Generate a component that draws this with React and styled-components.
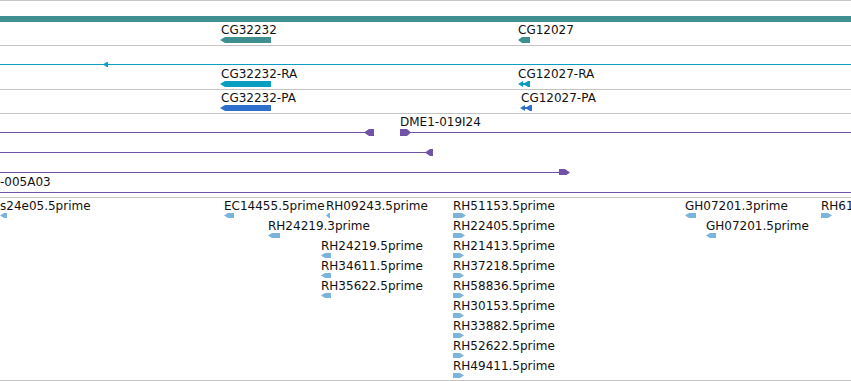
import styled, { createGlobalStyle } from "styled-components";

const GlobalStyle = createGlobalStyle`
  html, body {
    margin: 0;
    padding: 0;
    background: #ffffff;
  }
  body {
    font-family: "DejaVu Sans", "Liberation Sans", sans-serif;
  }
`;

const COLORS = {
  gene: "#3f8f90",
  rna: "#0a9ec0",
  protein: "#2f6fcc",
  clone: "#7052a8",
  est: "#7ab4dc",
};

const WIDTH = 851;

const Browser = styled.div`
  display: flex;
  flex-direction: column;
  width: ${WIDTH}px;
  height: 381px;
  overflow: hidden;
  border-bottom: 1px solid #c4c4c4;
  box-sizing: border-box;
`;

const Track = styled.section`
  display: flex;
  flex-direction: column;
  flex: none;
  height: ${(p) => p.$h}px;
  padding-top: ${(p) => p.$pad || 0}px;
  box-sizing: border-box;
  border-top: 1px solid #c4c4c4;
  overflow: hidden;
`;

// one horizontal lane of a track; features sit on it at their genomic x
const Lane = styled.div`
  position: relative;
  flex: none;
  height: ${(p) => p.$h}px;
`;

const StrandBar = styled.div`
  flex: none;
  height: 6px;
  background: ${(p) => p.$color};
  margin-bottom: 1px;
`;

const Feature = styled.div`
  position: absolute;
  top: 0;
  left: ${(p) => p.$x}px;
  display: flex;
  flex-direction: column;
  align-items: flex-start;
`;

const Label = styled.span`
  display: block;
  font-size: 12px;
  line-height: 14px;
  height: 14px;
  padding-left: ${(p) => p.$indent || 0}px;
  color: #111;
  white-space: nowrap;
`;

const Glyph = styled.svg`
  display: block;
  flex: none;
`;

const LaneDrawing = styled.svg`
  display: block;
  flex: none;
`;

function arrowPoints(w, h, dir, tip) {
  return dir === "left"
    ? `0,${h / 2} ${tip},0 ${w},0 ${w},${h} ${tip},${h}`
    : `0,0 ${w - tip},0 ${w},${h / 2} ${w - tip},${h} 0,${h}`;
}

// box with a pointed end, the way a feature on one strand is drawn
function Arrow({ w, h = 6, dir = "left", color, tip = 4 }) {
  return (
    <Glyph width={w} height={h} viewBox={`0 0 ${w} ${h}`}>
      <polygon points={arrowPoints(w, h, dir, tip)} fill={color} />
    </Glyph>
  );
}

function DoubleArrow({ color }) {
  return (
    <Glyph width={13} height={6} viewBox="0 0 13 6">
      <polygon points="0,3 5,0 5,6" fill={color} />
      <polygon points="5,3 10,0 10,6" fill={color} />
      <rect x="4" y="2" width="8" height="2" fill={color} />
      <rect x="10" y="0" width="2" height="6" fill={color} />
    </Glyph>
  );
}

function LabelledFeature({ x, label, indent, children }) {
  return (
    <Feature $x={x}>
      <Label $indent={indent}>{label}</Label>
      {children}
    </Feature>
  );
}

// a line across the lane with arrow heads at given places
function LineLane({ h, y, color, segments, heads = [] }) {
  return (
    <LaneDrawing width={WIDTH} height={h} viewBox={`0 0 ${WIDTH} ${h}`}>
      {segments.map(([x1, x2]) => (
        <rect key={x1} x={x1} y={y} width={x2 - x1} height={1} fill={color} />
      ))}
      {heads.map((hd) => (
        <polygon
          key={hd.x}
          transform={`translate(${hd.x} ${y + 0.5 - hd.h / 2})`}
          points={arrowPoints(hd.w, hd.h, hd.dir, hd.tip)}
          fill={color}
        />
      ))}
    </LaneDrawing>
  );
}

const estFeatures = [
  { label: "s24e05.5prime", x: 0, row: 0, dir: "left", w: 7 },
  { label: "EC14455.5prime", x: 224, row: 0, dir: "left", w: 10 },
  { label: "RH09243.5prime", x: 326, row: 0, dir: "left", w: 4, tip: 3 },
  { label: "RH24219.3prime", x: 268, row: 1, dir: "left", w: 12 },
  { label: "RH24219.5prime", x: 321, row: 2, dir: "left", w: 10 },
  { label: "RH34611.5prime", x: 321, row: 3, dir: "left", w: 10 },
  { label: "RH35622.5prime", x: 321, row: 4, dir: "left", w: 10 },
  { label: "RH51153.5prime", x: 453, row: 0, dir: "right", w: 13 },
  { label: "RH22405.5prime", x: 453, row: 1, dir: "right", w: 12 },
  { label: "RH21413.5prime", x: 453, row: 2, dir: "right", w: 11 },
  { label: "RH37218.5prime", x: 453, row: 3, dir: "right", w: 11 },
  { label: "RH58836.5prime", x: 453, row: 4, dir: "right", w: 11 },
  { label: "RH30153.5prime", x: 453, row: 5, dir: "right", w: 11 },
  { label: "RH33882.5prime", x: 453, row: 6, dir: "right", w: 11 },
  { label: "RH52622.5prime", x: 453, row: 7, dir: "right", w: 11 },
  { label: "RH49411.5prime", x: 453, row: 8, dir: "right", w: 11 },
  { label: "GH07201.3prime", x: 685, row: 0, dir: "left", w: 11 },
  { label: "GH07201.5prime", x: 706, row: 1, dir: "left", w: 10 },
  { label: "RH61453.5prime", x: 821, row: 0, dir: "right", w: 11 },
];

const estLanes = Array.from({ length: 9 }, (_, i) =>
  estFeatures.filter((f) => f.row === i)
);

export default function App() {
  return (
    <>
      <GlobalStyle />
      <Browser>
        <Track $h={45} $pad={15}>
          <StrandBar $color={COLORS.gene} />
          <Lane $h={20}>
            <LabelledFeature x={220} indent={1} label="CG32232">
              <Arrow w={51} color={COLORS.gene} tip={5} />
            </LabelledFeature>
            <LabelledFeature x={518} label="CG12027">
              <Arrow w={12} color={COLORS.gene} />
            </LabelledFeature>
          </Lane>
        </Track>

        <Track $h={44} $pad={15}>
          <LineLane
            h={6}
            y={3}
            color={COLORS.rna}
            segments={[[0, WIDTH]]}
            heads={[{ x: 103, w: 5, h: 5, dir: "left", tip: 4 }]}
          />
          <Lane $h={20}>
            <LabelledFeature x={220} indent={1} label="CG32232-RA">
              <Arrow w={51} color={COLORS.rna} tip={5} />
            </LabelledFeature>
            <LabelledFeature x={518} label="CG12027-RA">
              <DoubleArrow color={COLORS.rna} />
            </LabelledFeature>
          </Lane>
        </Track>

        <Track $h={24} $pad={1}>
          <Lane $h={20}>
            <LabelledFeature x={220} indent={1} label="CG32232-PA">
              <Arrow w={51} color={COLORS.protein} tip={5} />
            </LabelledFeature>
            <LabelledFeature x={520} indent={1} label="CG12027-PA">
              <DoubleArrow color={COLORS.protein} />
            </LabelledFeature>
          </Lane>
        </Track>

        <Track $h={84} $pad={1}>
          <Label $indent={400}>DME1-019I24</Label>
          <LineLane
            h={20}
            y={3}
            color={COLORS.clone}
            segments={[
              [0, 368],
              [408, WIDTH],
            ]}
            heads={[
              { x: 364, w: 10, h: 7, dir: "left", tip: 5 },
              { x: 400, w: 11, h: 7, dir: "right", tip: 4 },
            ]}
          />
          <LineLane
            h={20}
            y={3}
            color={COLORS.clone}
            segments={[[0, 428]]}
            heads={[{ x: 425, w: 8, h: 7, dir: "left", tip: 5 }]}
          />
          <LineLane
            h={6}
            y={3}
            color={COLORS.clone}
            segments={[[0, 562]]}
            heads={[{ x: 559, w: 11, h: 7, dir: "right", tip: 5 }]}
          />
          <Label>-005A03</Label>
          <LineLane h={6} y={3} color={COLORS.clone} segments={[[0, WIDTH]]} />
        </Track>

        <Track $h={183} $pad={1}>
          {estLanes.map((lane, i) => (
            <Lane key={i} $h={20}>
              {lane.map((e) => (
                <LabelledFeature key={e.label} x={e.x} label={e.label}>
                  <Arrow
                    w={e.w}
                    h={5}
                    tip={e.tip || 4}
                    dir={e.dir}
                    color={COLORS.est}
                  />
                </LabelledFeature>
              ))}
            </Lane>
          ))}
        </Track>
      </Browser>
    </>
  );
}
